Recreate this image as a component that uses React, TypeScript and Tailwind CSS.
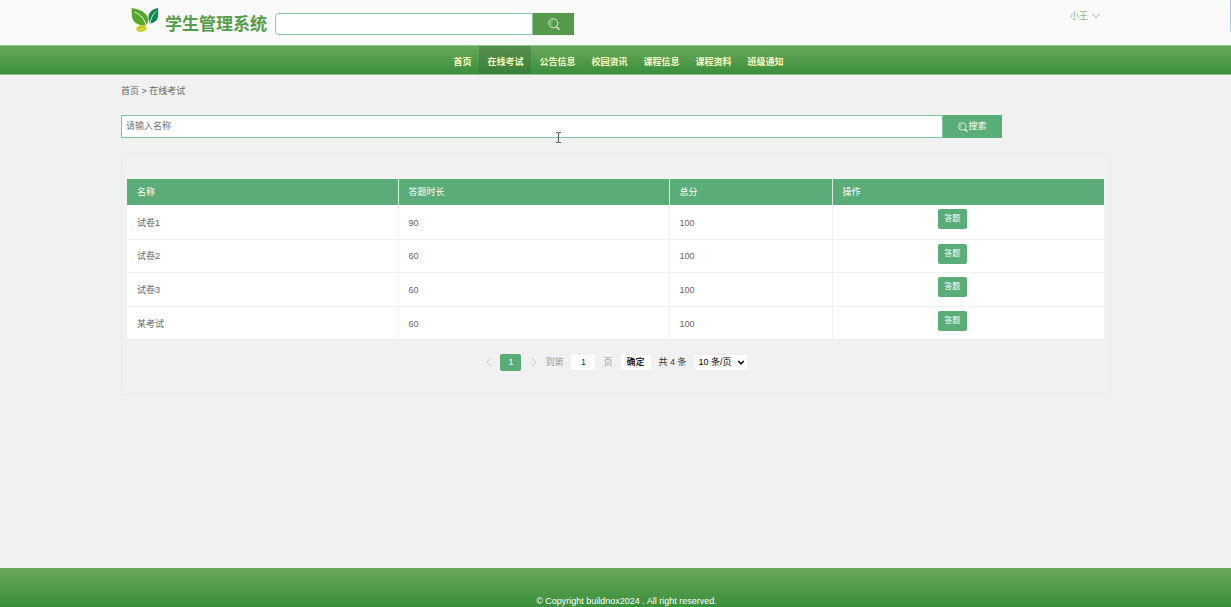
import { useState } from "react";

const navItems = ["首页", "在线考试", "公告信息", "校园资讯", "课程信息", "课程资料", "班级通知"];

const papers = [
  { name: "试卷1", minutes: 90, score: 100 },
  { name: "试卷2", minutes: 60, score: 100 },
  { name: "试卷3", minutes: 60, score: 100 },
  { name: "某考试", minutes: 60, score: 100 },
];

function SearchIcon({ className }: { className: string }) {
  return (
    <svg viewBox="0 0 24 24" fill="none" stroke="currentColor" className={className} aria-hidden="true">
      <circle cx="10.5" cy="10.5" r="9" strokeWidth="2" />
      <path d="M9.5 5.5a5 5 0 0 0-4 5c0 1.600.7 3 1.800 4" strokeWidth="1.200" strokeLinecap="round" />
      <path d="M16.500 17l1.500 1.500" strokeWidth="2" />
      <path d="M18.500 19l3 3" strokeWidth="3.500" strokeLinecap="round" />
    </svg>
  );
}

function LeafLogo() {
  return (
    <svg viewBox="0 0 30 26" className="mt-[7px] h-[26px] w-[30px]" aria-hidden="true">
      {/* big leaf */}
      <path d="M1.500 1C8 1.800 15 4.500 17.500 9.500c1.300 3 .6 6.500-1.200 8.800C10 19 4 16.500 2.400 11.500 1.400 8 1.900 4 1.500 1z" fill="#56a52c" />
      <path d="M5 5c5 2.500 9 6.500 11.200 13" fill="none" stroke="#fafafa" strokeWidth="1" />
      {/* small leaf */}
      <path d="M28 1c-5 1-8.500 3.500-9.300 7.500-.5 3 .1 5.800 1.300 8 4.500-.6 7.500-3 8.100-7.200.4-3-.300-5.500-.1-8.300z" fill="#0b8a4d" />
      <path d="M26 4.500c-3 2.800-5 6-6 11.500" fill="none" stroke="#fafafa" strokeWidth=".8" />
      {/* seed */}
      <path d="M6 22c1.500-2.800 4.500-4.300 7.500-3.800 2 .4 3.200 1.500 3.300 3.200-1.500 2.500-4 3.600-6.800 3.400-2-.2-3.500-1.200-4-2.800z" fill="#c9cc1c" />
      <path d="M8 22.500c2.500.5 5-.3 8-2" fill="none" stroke="#eef0a0" strokeWidth=".6" />
    </svg>
  );
}

function Header() {
  return (
    <header className="bg-[#fafafa]">
      <div className="mx-auto flex h-[45px] max-w-[989px] items-start pr-2.5 pl-[9px]">
        <a href="#home" className="flex items-start gap-[5px]">
          <LeafLogo />
          <span className="pt-3 text-[17px] leading-[26px] font-bold text-[#559c4c]">学生管理系统</span>
        </a>
        <form className="mt-[13px] ml-2 flex h-[22px]" onSubmit={(e) => e.preventDefault()}>
          <input
            type="text"
            aria-label="站内搜索"
            className="w-[258px] rounded-l border border-[#8cc7a1] bg-white px-2 text-[9px] text-gray-600 outline-none"
          />
          <button type="submit" aria-label="搜索" className="flex w-[41px] items-center justify-center bg-[#559b4b] text-[#e6f3e0]">
            <SearchIcon className="size-3" />
          </button>
        </form>
        <button type="button" className="mt-2.5 ml-auto flex items-center gap-1 leading-3 text-[#8db887]">
          小王
          <svg viewBox="0 0 8 6" className="h-1.5 w-2" fill="none" stroke="currentColor" aria-hidden="true">
            <path d="M.8 1 4 4.500 7.200 1" />
          </svg>
        </button>
      </div>
    </header>
  );
}

function Nav() {
  return (
    <nav className="h-[30px] border-y border-[#8fc48b] bg-linear-to-b from-[#69a75b] to-[#398f3c]">
      <ul className="flex h-full justify-center pl-1.5">
        {navItems.map((item) => (
          <li key={item} className={item === "在线考试" ? "bg-[#3a6b38]/40" : ""}>
            <a href="#nav" className="block px-2 pt-1 leading-6 font-bold text-[#fdfbc4]">
              {item}
            </a>
          </li>
        ))}
      </ul>
    </nav>
  );
}

function ExamTable() {
  return (
    <table className="w-full table-fixed border-collapse bg-white text-left">
      <thead>
        <tr className="h-[26px] bg-[#5aac78] text-white">
          <th className="w-[271px] border-r border-[#d9ecdf] px-2.5 pt-0.5 font-normal">名称</th>
          <th className="w-[271px] border-r border-[#d9ecdf] px-2.5 pt-0.5 font-normal">答题时长</th>
          <th className="w-[163px] border-r border-[#d9ecdf] px-2.5 pt-0.5 font-normal">总分</th>
          <th className="px-2.5 pt-0.5 font-normal">操作</th>
        </tr>
      </thead>
      <tbody>
        {papers.map((paper) => (
          <tr key={paper.name} className="border-b border-[#f1f1f1] last:border-b-0 odd:h-[34px] even:h-[33px]">
            <td className="border-r border-[#f1f1f1] px-2.5 pt-[3px]">{paper.name}</td>
            <td className="border-r border-[#f1f1f1] px-2.5 pt-[3px]">{paper.minutes}</td>
            <td className="border-r border-[#f1f1f1] px-2.5 pt-[3px]">{paper.score}</td>
            <td className="pt-1 pr-8 text-center align-top">
              <button type="button" className="h-5 w-[29px] rounded-xs bg-[#5aac78] text-[8px] text-white">
                答题
              </button>
            </td>
          </tr>
        ))}
      </tbody>
    </table>
  );
}

function Pagination() {
  const [page, setPage] = useState("1");

  return (
    <div className="mt-3.5 flex h-[18px] items-center justify-center gap-2 pl-0.5 text-[#333]">
      <button type="button" aria-label="上一页" className="text-[#c8c8c8]">
        <svg viewBox="0 0 6 10" className="h-2.5 w-1.5" fill="none" stroke="currentColor" aria-hidden="true">
          <path d="M5 1 1 5l4 4" />
        </svg>
      </button>
      <button type="button" className="h-[17px] w-[21px] rounded-xs bg-[#5aac78] pt-px text-white">
        1
      </button>
      <button type="button" aria-label="下一页" className="pl-0.5 text-[#c8c8c8]">
        <svg viewBox="0 0 6 10" className="h-2.5 w-1.5" fill="none" stroke="currentColor" aria-hidden="true">
          <path d="M1 1l4 4-4 4" />
        </svg>
      </button>
      <label htmlFor="page" className="pt-px text-[#999]">
        到第
      </label>
      <input
        id="page"
        value={page}
        onChange={(e) => setPage(e.target.value)}
        className="h-[15px] w-6 bg-white text-center outline-none"
      />
      <span className="pt-px text-[#999]">页</span>
      <button type="button" className="h-[15px] w-[30px] bg-white pt-px font-medium text-black">
        确定
      </button>
      <span className="pt-px">共 4 条</span>
      <div className="relative h-[15px]">
        <select
          aria-label="每页条数"
          className="block h-[15px] w-[52px] appearance-none bg-white pt-px pl-1 text-black outline-none"
        >
          <option>10 条/页</option>
          <option>20 条/页</option>
          <option>30 条/页</option>
        </select>
        <svg
          viewBox="0 0 8 6"
          className="pointer-events-none absolute top-[5px] right-0.5 h-1.5 w-2"
          fill="none"
          stroke="#111"
          strokeWidth="1.6"
          aria-hidden="true"
        >
          <path d="M1.200 1 4 3.800 6.800 1" />
        </svg>
      </div>
    </div>
  );
}

export default function App() {
  return (
    <div className="relative flex min-h-screen flex-col bg-[#f1f1f1] font-['Liberation_Sans','Noto_Sans_CJK_SC',sans-serif] text-[9px] text-[#666]">
      <Header />
      <Nav />

      <main className="mx-auto w-full max-w-[989px] flex-1">
        <div className="pt-2.5 leading-3">
          <a href="#home">首页</a> &gt; <span>在线考试</span>
        </div>

        <form className="relative mt-[18px] flex h-[23px] w-[881px] max-w-full" onSubmit={(e) => e.preventDefault()}>
          <input
            type="text"
            aria-label="名称"
            placeholder="请输入名称"
            className="min-w-0 flex-1 border border-[#7cc49b] bg-white px-1 outline-none placeholder:text-[#757575]"
          />
          <button type="submit" className="flex w-[59px] items-center justify-center bg-[#5aac78] text-white">
            <SearchIcon className="size-2.5" />
            搜索
          </button>
          {/* text pointer */}
          <svg
            viewBox="0 0 7 13"
            className="absolute top-4 left-[434px] h-[13px] w-[7px]"
            fill="none"
            stroke="#555"
            aria-hidden="true"
          >
            <path d="M1 1.500h2l.5.500.5-.5h2M3.500 2v9M1 11.500h2l.5-.5.5.5h2" />
          </svg>
        </form>

        <section className="mt-4 border border-[#e8ecea] pt-[19px] pb-1.5">
          <div className="border-y border-[#eeeeee] px-[5px] pt-1 pb-4">
            <ExamTable />
            <Pagination />
          </div>
        </section>
      </main>

      <footer className="bg-linear-to-b from-[#69a75b] to-[#398f3c] pt-[27px] pl-[22px] text-center leading-3 text-white">
        © Copyright buildnox2024 . All right reserved.
      </footer>

      {/* edge of the floating side widget */}
      <div className="absolute top-0 right-0 h-8 w-px bg-linear-to-b from-[#b9b8f5] to-[#9fd4f7]" />
    </div>
  );
}
